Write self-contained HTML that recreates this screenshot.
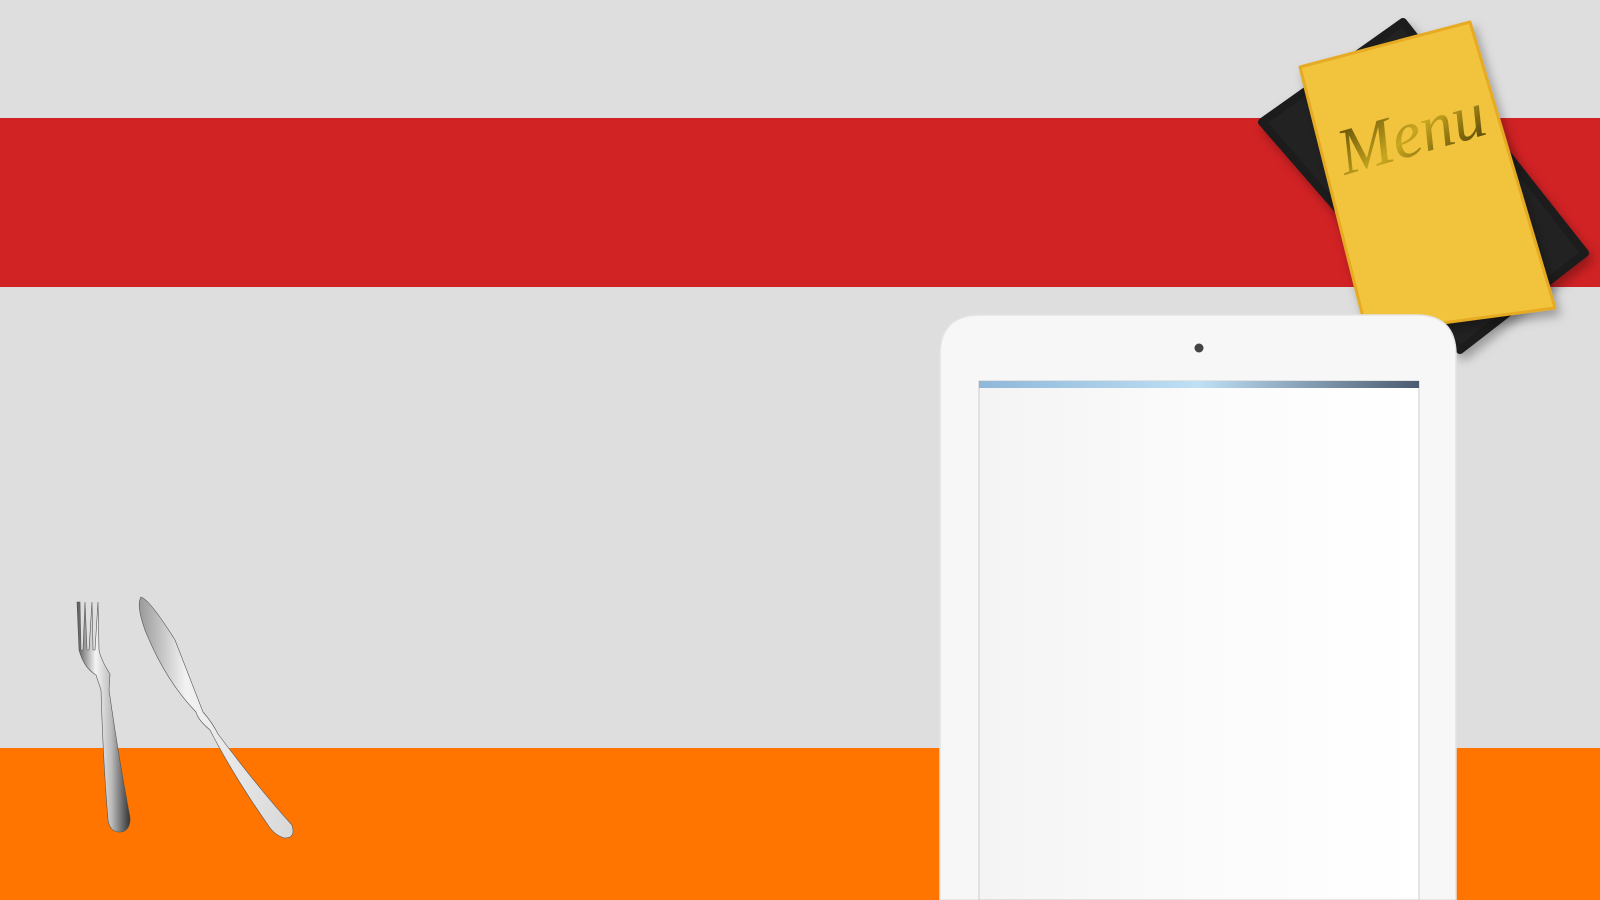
<!DOCTYPE html>
<html><head><meta charset="utf-8"><style>
html,body{margin:0;padding:0;width:1600px;height:900px;overflow:hidden;background:#dedede}
</style></head><body>
<svg width="1600" height="900" viewBox="0 0 1600 900" xmlns="http://www.w3.org/2000/svg">
<defs>
<linearGradient id="steel" x1="0" y1="0" x2="1" y2="0">
<stop offset="0" stop-color="#555"/><stop offset=".35" stop-color="#f4f4f4"/><stop offset=".65" stop-color="#bbb"/><stop offset="1" stop-color="#333"/>
</linearGradient>
<linearGradient id="blade" x1="0" y1="0" x2="1" y2="0">
<stop offset="0" stop-color="#999"/><stop offset=".3" stop-color="#f2f2f2"/><stop offset="1" stop-color="#d8d8d8"/>
</linearGradient>
<linearGradient id="bar" x1="0" y1="0" x2="1" y2="0">
<stop offset="0" stop-color="#8fb7d8"/><stop offset=".5" stop-color="#bfe0f5"/><stop offset="1" stop-color="#4b5a70"/>
</linearGradient>
<linearGradient id="gold" x1="0" y1="0" x2="1" y2="1">
<stop offset="0" stop-color="#4a3c00"/><stop offset=".5" stop-color="#c9a820"/><stop offset="1" stop-color="#3d3000"/>
</linearGradient>
<linearGradient id="scr" x1="0" y1="0" x2="1" y2="0">
<stop offset="0" stop-color="#f4f4f4"/><stop offset=".5" stop-color="#fbfbfb"/><stop offset="1" stop-color="#fff"/>
</linearGradient>
<filter id="sh" x="-20%" y="-20%" width="140%" height="140%"><feDropShadow dx="4" dy="6" stdDeviation="5" flood-opacity=".3"/></filter>
</defs>
<rect x="0" y="0" width="1600" height="900" fill="#dedede"/>
<rect x="0" y="118" width="1600" height="169" fill="#d12224"/>
<rect x="0" y="748" width="1600" height="152" fill="#ff7500"/>
<polygon points="1262,122 1403,22 1585,253 1460,350" fill="#232323" stroke="#1a1a1a" stroke-width="8" stroke-linejoin="round" filter="url(#sh)"/>
<polygon points="1300,67 1470,22 1555,308 1367,333" fill="#f2c33d" stroke="#e6ab22" stroke-width="3" stroke-linejoin="round" filter="url(#sh)"/>
<text x="0" y="0" transform="translate(1345,175) rotate(-16)" font-family="Liberation Serif, serif" font-style="italic" font-size="66" fill="url(#gold)">Menu</text>
<path d="M940,900 L940,355 Q940,315 980,315 L1416,315 Q1456,315 1456,355 L1456,900 Z" fill="#f7f7f7" stroke="#e4e4e4" stroke-width="1.5"/>
<rect x="979" y="381" width="440" height="519" fill="url(#scr)" stroke="#ccc"/>
<rect x="979" y="381" width="440" height="7" fill="url(#bar)"/>
<circle cx="1199" cy="348" r="4.5" fill="#444"/>
<g stroke="#555" stroke-width=".6">
<path fill="url(#steel)" d="M77,602 L79,650 Q84,668 96,675 L101,690 Q103,760 108,820 Q110,833 121,832 Q131,830 130,817 Q119,760 109,690 L110,674 Q101,660 99,650 L98,602 L95,650 L93,650 L92,602 L89,650 L87,650 L85,602 L83,650 L81,650 L80,602 Z"/>
<path fill="url(#blade)" d="M141,597 Q150,600 175,640 L203,712 Q212,722 218,734 Q260,790 292,825 Q296,838 285,838 Q275,836 268,825 Q233,775 210,730 Q198,720 196,712 Q165,680 145,630 Q136,605 141,597 Z"/>
</g>
</svg>
</body></html>
